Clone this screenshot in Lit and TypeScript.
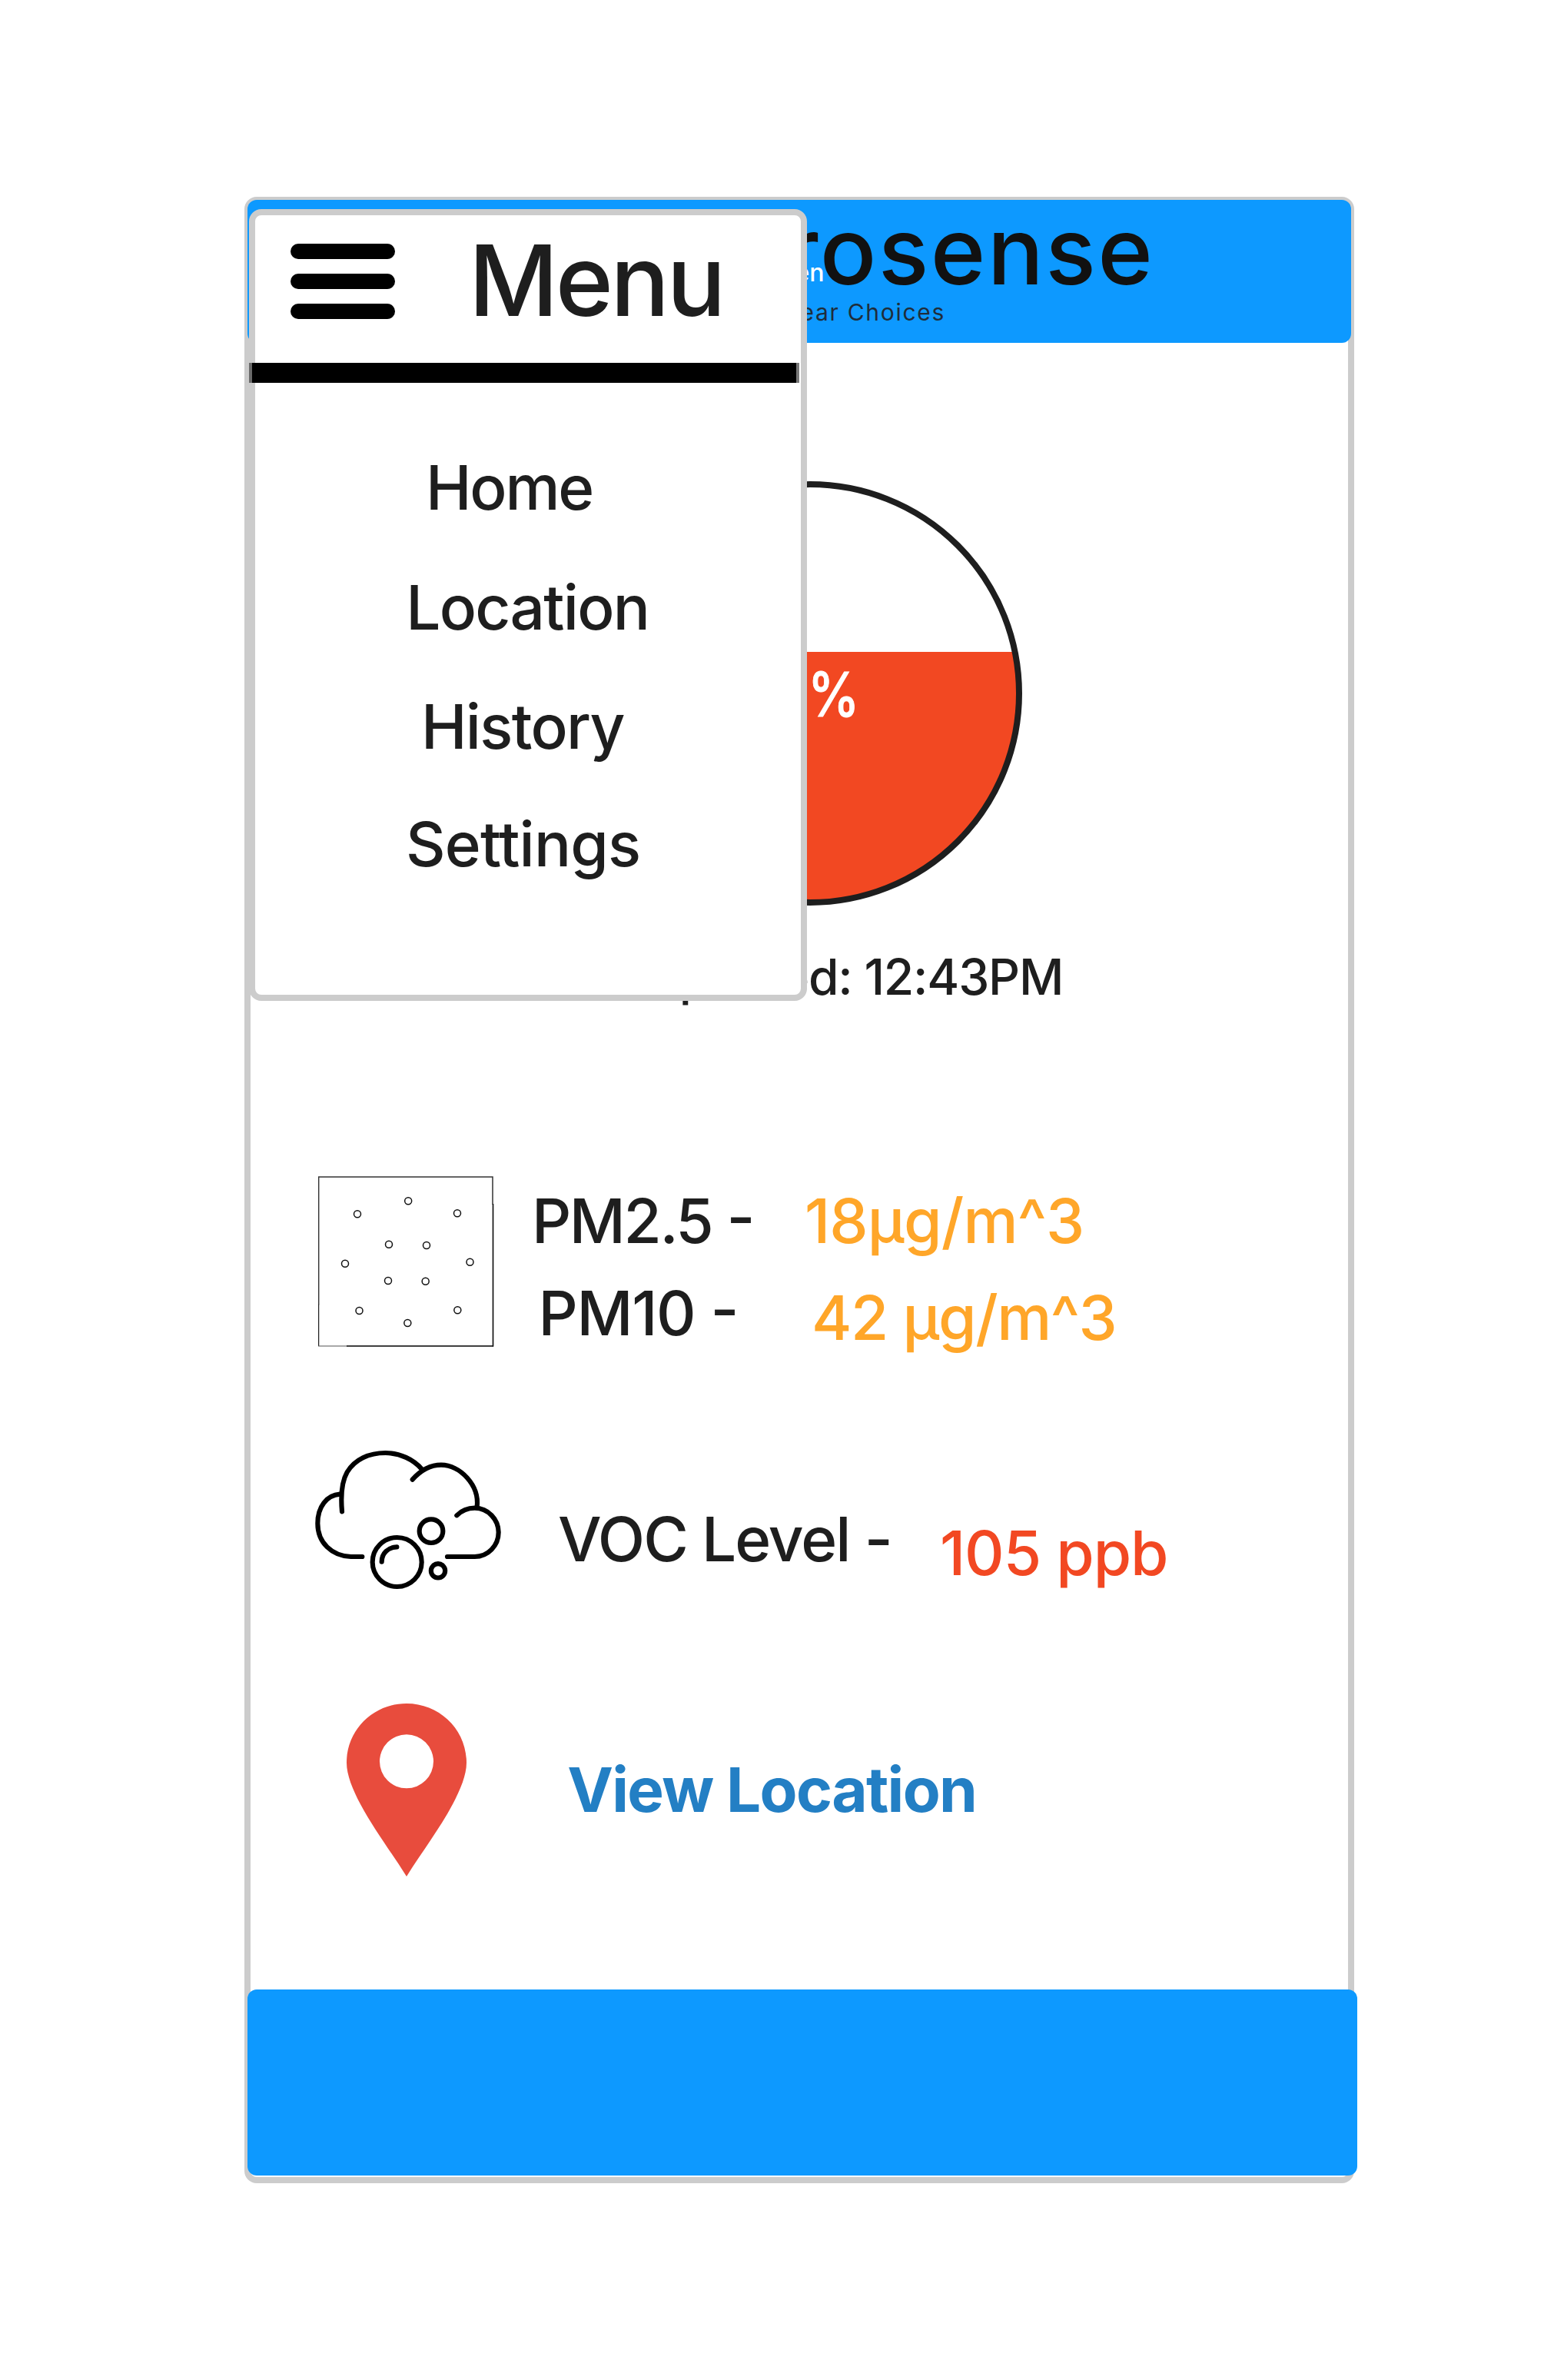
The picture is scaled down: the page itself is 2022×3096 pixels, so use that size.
import { LitElement, html, css, svg } from "lit";
import { customElement } from "lit/decorators.js";

const PARTICLES: [number, number][] = [
  [423.5, 187], [225, 238], [615, 235], [348, 356], [495, 360], [177, 431],
  [664.5, 425], [345, 498], [491, 500], [232.5, 615], [616, 613], [421, 663],
];

@customElement("side-menu")
class SideMenu extends LitElement {
  static styles = css`
    :host {
      display: flex;
      flex-direction: column;
      box-sizing: border-box;
      border: 8px solid #ccc;
      border-radius: 16px;
      background: #fff;
    }
    .head {
      display: flex;
      align-items: flex-start;
      gap: 95.6px;
      box-sizing: border-box;
      height: 191.5px;
      padding: 21.2px 0 0 45.6px;
    }
    .burger {
      display: flex;
      flex-direction: column;
      gap: 19px;
      margin-top: 15.8px;
    }
    .burger span {
      width: 136.500px;
      height: 20px;
      border-radius: 10px;
      background: #000;
    }
    .title {
      font-size: 128px;
      line-height: 128px;
      letter-spacing: -3.7px;
    }
    .rule {
      width: 716px;
      height: 26.2px;
      margin-left: -8px;
      background: #000;
      box-shadow: inset 4px 0 #6a6a6a, inset -4px 0 #777;
    }
    nav {
      display: flex;
      flex-direction: column;
      padding-top: 96.2px;
      font-size: 80px;
      line-height: 80px;
    }
    .home { margin-left: 222px; letter-spacing: -2.2px; }
    .location { margin: 76.2px 0 0 196.3px; letter-spacing: -1.74px; }
    .history { margin: 75.2px 0 0 216px; letter-spacing: -1.7px; }
    .settings { margin: 72.6px 0 0 196px; letter-spacing: -0.83px; }
  `;

  render() {
    return html`
      <div class="head">
        <div class="burger"><span></span><span></span><span></span></div>
        <div class="title">Menu</div>
      </div>
      <div class="rule"></div>
      <nav>
        <div class="home">Home</div>
        <div class="location">Location</div>
        <div class="history">History</div>
        <div class="settings">Settings</div>
      </nav>
    `;
  }
}

@customElement("app-root")
class AppRoot extends LitElement {
  static styles = css`
    :host {
      display: flow-root;
      box-sizing: border-box;
      height: 3096px;
      background: #fff;
      color: #1e1e1e;
      font-family: Inter, "Liberation Sans", sans-serif;
      font-weight: 500;
      white-space: nowrap;
    }
    svg { display: block; flex: none; }
    .frame {
      position: relative;
      display: flex;
      flex-direction: column;
      box-sizing: border-box;
      width: 1444px;
      height: 2584px;
      margin: 256px 0 0 318px;
      border: 8px solid #ccc;
      border-radius: 16px;
    }
    .frame > * { flex-shrink: 0; }
    .header {
      position: relative;
      display: flex;
      flex-direction: column;
      align-items: flex-end;
      box-sizing: border-box;
      height: 186px;
      margin: -4px -4px 0;
      padding-top: 4.6px;
      border-radius: 12px;
      background: #0d99ff;
    }
    .brand {
      padding-right: 255.7px;
      font-size: 122px;
      line-height: 122px;
      letter-spacing: 2.3px;
      color: #111;
    }
    .tagline {
      padding: 4px 528px 0 0;
      font-size: 30px;
      line-height: 30px;
      font-weight: 400;
      letter-spacing: 1.7px;
      color: #1f2d3a;
    }
    .state {
      position: absolute;
      left: 712.5px;
      top: 79px;
      font-size: 32px;
      line-height: 32px;
      color: #fff;
    }
    .gauge {
      position: relative;
      width: 552px;
      height: 552px;
      margin: 180px 0 0 452px;
    }
    .percent {
      position: absolute;
      left: 273.2px;
      top: 236.7px;
      font-size: 80px;
      line-height: 80px;
      color: #fff;
      -webkit-text-stroke: 1px #fff;
      transform: scaleX(0.85);
      transform-origin: left;
    }
    .updated {
      margin: 61.4px 0 0 371.5px;
      font-size: 64px;
      line-height: 64px;
      letter-spacing: -1.18px;
    }
    .row {
      display: flex;
      align-items: flex-start;
      font-size: 80px;
      line-height: 80px;
    }
    .pm { height: 222px; margin: 226.6px 0 0 88px; }
    .labels { width: 355.1px; margin-left: 48.9px; padding-top: 17.9px; }
    .values { padding-top: 17.9px; color: #ffa629; }
    .dash { position: relative; top: -5px; }
    .pm25 { letter-spacing: -2.37px; }
    .pm10 { margin: 40px 0 0 8.6px; letter-spacing: -1.3px; }
    .v25 { letter-spacing: -0.84px; }
    .v10 { margin: 46px 0 0 9px; letter-spacing: -1.5px; }
    .voc { height: 184px; margin: 133px 0 0 82px; }
    .voc-label { width: 497px; margin: 76.6px 0 0 72px; letter-spacing: -2.02px; }
    .voc-value { margin-top: 94.9px; letter-spacing: -1.08px; color: #f24822; }
    .place { height: 225px; margin: 147px 0 0 125px; }
    .link {
      margin: 71.6px 0 0 131.2px;
      font-weight: 700;
      letter-spacing: -1.64px;
      color: #237fc4;
    }
    .footer {
      height: 242px;
      margin: 147px -12px 0 -4px;
      border-radius: 12px;
      background: #0d99ff;
    }
    side-menu {
      position: absolute;
      left: -2px;
      top: 8px;
      width: 726px;
      height: 1030px;
    }
  `;

  render() {
    return html`
      <div class="frame">
        <div class="header">
          <div class="brand">rosense</div>
          <div class="tagline">ear Choices</div>
          <div class="state">en</div>
        </div>

        <div class="gauge">
          <svg width="552" height="552" viewBox="0 0 552 552">
            <clipPath id="level"><rect x="0" y="222" width="552" height="330" /></clipPath>
            <circle cx="276" cy="276" r="272" fill="#f24822" clip-path="url(#level)" />
            <circle cx="276" cy="276" r="272" fill="none" stroke="#1e1e1e" stroke-width="8" />
          </svg>
          <div class="percent">%</div>
        </div>
        <div class="updated">Last Updated: 12:43PM</div>

        <div class="row pm">
          <svg width="229" height="222" viewBox="72 90 687 666" fill="none" stroke="#111" stroke-width="4.500">
            <path d="M74 592V93H753V200" stroke="#333" stroke-width="4.500" />
            <path d="M73.500 590V753" stroke="#222" />
            <path d="M72 753H184" stroke="#555" stroke-width="3.500" />
            <path d="M183 753H756" stroke="#000" stroke-width="5" />
            <path d="M754.500 198V755" stroke="#111" stroke-width="5" />
            ${PARTICLES.map(([x, y]) => svg`<circle cx=${x} cy=${y} r="13.500" />`)}
          </svg>
          <div class="labels">
            <div class="pm25">PM2.5 <span class="dash">-</span></div>
            <div class="pm10">PM10 <span class="dash">-</span></div>
          </div>
          <div class="values">
            <div class="v25">18µg/m^3</div>
            <div class="v10">42 µg/m^3</div>
          </div>
        </div>

        <div class="row voc">
          <svg width="246" height="184" viewBox="54 75 738 552" fill="none" stroke="#000" stroke-width="18.500" stroke-linecap="round">
            <path d="M244 495H200C125 492 70 440 70 365C70 300 105 255 157 251" />
            <path d="M165 319C159 250 165 200 185 165C215 115 270 90 335 90C390 90 445 115 478 155" />
            <path d="M440 194C475 155 515 137 552 137C625 137 702 215 692 300" />
            <path d="M613 334C632 315 655 305 683 305C735 305 776 350 776 400C776 452 735 495 683 495H576" />
            <circle cx="513" cy="395" r="46" />
            <circle cx="380" cy="516" r="96" />
            <circle cx="540" cy="550" r="27.500" />
            <path d="M379 457C345 458 320 482 320 515" />
          </svg>
          <div class="voc-label">VOC Level -</div>
          <div class="voc-value">105 ppb</div>
        </div>

        <div class="row place">
          <svg width="156" height="225" viewBox="0 0 156 225">
            <path fill="#e84c3d" fill-rule="evenodd" d="M78 0C121 0 156 34 156 77C156 93 148 112 138 131C121 163 98 193 78 225C58 193 35 163 18 131C8 112 0 93 0 77C0 34 35 0 78 0ZM78 40.300A35 35 0 1 0 78 110.300A35 35 0 1 0 78 40.300Z" />
          </svg>
          <div class="link">View Location</div>
        </div>

        <div class="footer"></div>
        <side-menu></side-menu>
      </div>
    `;
  }
}
